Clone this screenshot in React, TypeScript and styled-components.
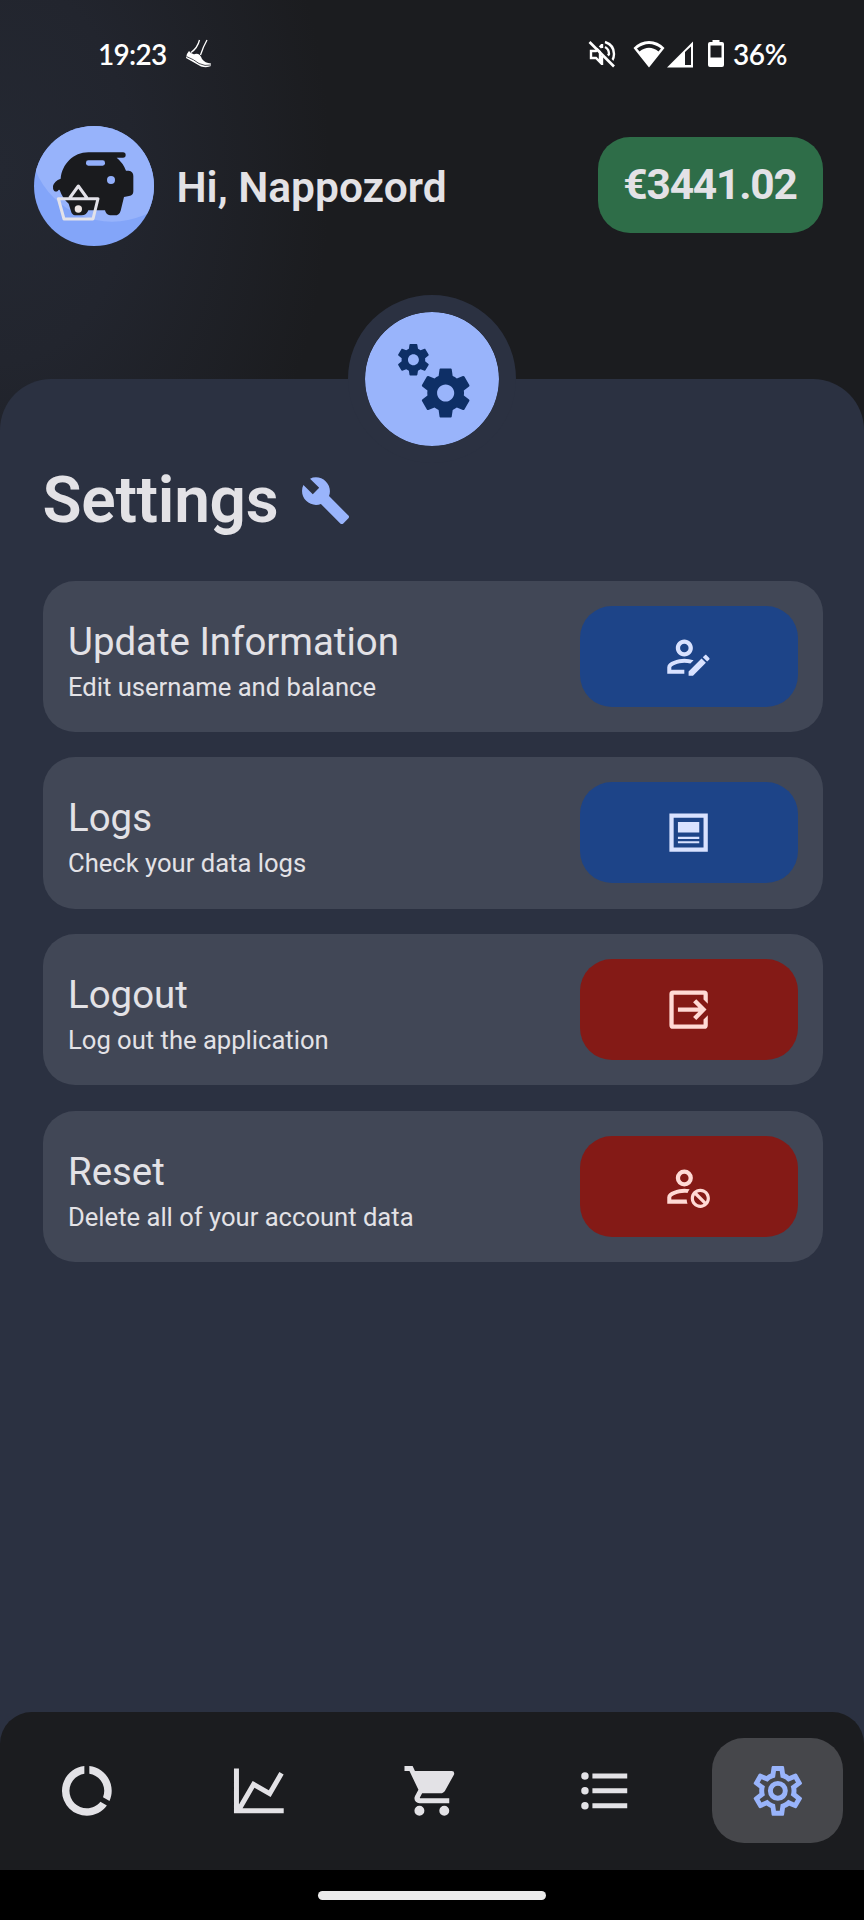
import React from 'react';
import styled, { createGlobalStyle } from 'styled-components';

const GlobalStyle = createGlobalStyle`
  *, *::before, *::after { box-sizing: border-box; }
  body { margin: 0; background: #000; }
`;

const Screen = styled.div`
  width: 864px;
  height: 1920px;
  overflow: hidden;
  display: flex;
  flex-direction: column;
  color: #e3e2e6;
  font-family: Roboto, sans-serif;
  background: #1b1c1f radial-gradient(330px 480px at 0 170px, #242832 0, #22252e 40%, #1b1c1f 100%) no-repeat;
`;

const StatusBar = styled.div`
  height: 108px;
  flex: none;
  display: flex;
  align-items: center;
  justify-content: space-between;
  padding: 0 75px 0 98px;
  color: #fff;
  font: 600 28px/32px Lato, sans-serif;
`;

const StatusGroup = styled.div`
  display: flex;
  align-items: center;
`;

const Clock = styled.span`
  width: 69px;
  white-space: nowrap;
  letter-spacing: -0.7px;
`;

const BatteryLevel = styled.span`
  width: 56px;
  margin-left: 8px;
  white-space: nowrap;
  letter-spacing: -0.4px;
`;

const StatusIcon = styled.svg<{ $ml?: number }>`
  display: block;
  flex: none;
  margin-left: ${(p) => p.$ml ?? 0}px;
`;

const Header = styled.header`
  height: 270.6px;
  flex: none;
  display: flex;
  align-items: flex-start;
  padding: 17.5px 41.5px 0 34px;
`;

const Greeting = styled.h2`
  margin: 40px 0 0 22.5px;
  flex: 1;
  font-size: 42.5px;
  line-height: 44px;
  font-weight: 600;
`;

const Balance = styled.div`
  margin-top: 11.5px;
  width: 225px;
  height: 96px;
  border-radius: 32px;
  display: flex;
  align-items: center;
  justify-content: center;
  background: #2e6d48;
  font-size: 42.5px;
  line-height: 46px;
  font-weight: 700;
  letter-spacing: -1.2px;
`;

const Panel = styled.main`
  position: relative;
  flex: 1;
  padding: 85px 41.3px 0 42.5px;
  border-radius: 51px 51px 0 0;
  background: #2b3141;
`;

const HeroBadge = styled.div`
  position: absolute;
  top: -84px;
  left: 348px;
  width: 168px;
  height: 168px;
  border: 17px solid #2b3141;
  border-radius: 50%;
  display: flex;
  align-items: center;
  justify-content: center;
  background: #99b4fb;
  background-clip: padding-box;
  color: #0e2f66;
`;

const TitleRow = styled.div`
  display: flex;
  align-items: center;
  height: 74px;
  gap: 22px;
  color: #99b4fb;
`;

const Title = styled.h1`
  margin: 0;
  font-size: 64px;
  line-height: 74px;
  font-weight: 600;
  letter-spacing: -0.3px;
  color: #e3e2e6;
`;

const CardList = styled.div`
  margin-top: 43.2px;
  display: flex;
  flex-direction: column;
  gap: 25.4px;
`;

const Card = styled.section`
  height: 151.2px;
  padding: 0 25px 0 25.5px;
  border-radius: 32px;
  display: flex;
  align-items: center;
  justify-content: space-between;
  background: #414756;
`;

const CardText = styled.div`
  padding-top: 9px;
`;

const CardTitle = styled.div`
  font-size: 38.4px;
  line-height: 46px;
`;

const CardNote = styled.div`
  margin-top: 6px;
  font-size: 25.6px;
  line-height: 32px;
`;

const ActionButton = styled.button<{ $danger?: boolean }>`
  width: 218px;
  height: 101px;
  padding: 0;
  border: 0;
  border-radius: 32px;
  display: flex;
  align-items: center;
  justify-content: center;
  background: ${(p) => (p.$danger ? '#841a16' : '#1d4488')};
  color: ${(p) => (p.$danger ? '#ffdad5' : '#d9e2ff')};
`;

const NavBacking = styled.div`
  flex: none;
  background: #2b3141;
`;

const NavBar = styled.nav`
  height: 157.5px;
  border-radius: 32px 32px 0 0;
  display: grid;
  grid-template-columns: repeat(5, 1fr);
  align-items: center;
  justify-items: center;
  background: #1b1c1f;
`;

const NavItem = styled.button<{ $active?: boolean }>`
  width: 131px;
  height: 105px;
  padding: 0;
  border: 0;
  border-radius: 32px;
  display: flex;
  align-items: center;
  justify-content: center;
  background: ${(p) => (p.$active ? '#46474b' : 'transparent')};
  color: ${(p) => (p.$active ? '#99b4fb' : '#e3e2e6')};
`;

const GestureArea = styled.div`
  height: 50.5px;
  flex: none;
  display: flex;
  justify-content: center;
  padding-top: 21px;
  background: #000;
`;

const GestureBar = styled.div`
  width: 228px;
  height: 9px;
  border-radius: 5px;
  background: #ececec;
`;

const paths = {
  cogs: 'M15.9 18.45C17.25 18.45 18.35 17.35 18.35 16C18.35 14.65 17.25 13.55 15.9 13.55C14.54 13.55 13.45 14.65 13.45 16C13.45 17.35 14.54 18.45 15.9 18.45M21.1 16.68L22.58 17.84C22.71 17.95 22.75 18.13 22.66 18.29L21.26 20.71C21.17 20.86 21 20.92 20.83 20.86L19.09 20.16C18.73 20.44 18.33 20.67 17.91 20.85L17.64 22.7C17.62 22.87 17.47 23 17.3 23H14.5C14.32 23 14.18 22.87 14.15 22.7L13.89 20.85C13.46 20.67 13.07 20.44 12.71 20.16L10.96 20.86C10.81 20.92 10.62 20.86 10.54 20.71L9.14 18.29C9.05 18.13 9.09 17.95 9.22 17.84L10.7 16.68L10.65 16L10.7 15.31L9.22 14.16C9.09 14.05 9.05 13.86 9.14 13.71L10.54 11.29C10.62 11.13 10.81 11.07 10.96 11.13L12.71 11.84C13.07 11.56 13.46 11.32 13.89 11.15L14.15 9.29C14.18 9.13 14.32 9 14.5 9H17.3C17.47 9 17.62 9.13 17.64 9.29L17.91 11.15C18.33 11.32 18.73 11.56 19.09 11.84L20.83 11.13C21 11.07 21.17 11.13 21.26 11.29L22.66 13.71C22.75 13.86 22.71 14.05 22.58 14.16L21.1 15.31L21.15 16L21.1 16.68M6.69 8.07C7.56 8.07 8.26 7.37 8.26 6.5C8.26 5.63 7.56 4.92 6.69 4.92C5.82 4.92 5.13 5.63 5.13 6.5C5.13 7.37 5.82 8.07 6.69 8.07M10.03 6.94L11 7.68C11.07 7.75 11.09 7.87 11.03 7.97L10.13 9.53C10.08 9.63 9.96 9.67 9.86 9.63L8.74 9.18L8 9.62L7.81 10.81C7.79 10.92 7.7 11 7.59 11H5.79C5.67 11 5.58 10.92 5.56 10.81L5.4 9.62L4.64 9.18L3.52 9.63C3.41 9.67 3.3 9.63 3.24 9.53L2.34 7.97C2.28 7.87 2.31 7.75 2.39 7.68L3.34 6.94L3.31 6.5L3.34 6.06L2.39 5.32C2.31 5.25 2.28 5.13 2.34 5.03L3.24 3.47C3.3 3.37 3.41 3.33 3.52 3.37L4.63 3.82L5.4 3.38L5.56 2.19C5.58 2.08 5.67 2 5.79 2H7.59C7.7 2 7.79 2.08 7.81 2.19L8 3.38L8.74 3.82L9.86 3.37C9.96 3.33 10.08 3.37 10.13 3.47L11.03 5.03C11.09 5.13 11.07 5.25 11 5.32L10.03 6.06L10.06 6.5L10.03 6.94Z',
  wrench: 'M22.7 19L13.6 9.9C14.5 7.6 14 4.9 12.1 3C10.1 1 7.1 .6 4.7 1.7L9 6L6 9L1.6 4.7C.4 7.1 .9 10.1 2.9 12.1C4.8 14 7.5 14.5 9.8 13.6L18.9 22.7C19.3 23.1 19.9 23.1 20.3 22.7L22.6 20.4C23.1 20 23.1 19.3 22.7 19Z',
  userEdit: 'M2 17V20H10V18.11H3.9V17C3.9 16.36 7.03 14.9 10 14.9C10.96 14.91 11.91 15.04 12.83 15.28L14.35 13.76C12.95 13.29 11.5 13.03 10 13C7.33 13 2 14.33 2 17M10 4C7.79 4 6 5.79 6 8S7.79 12 10 12S14 10.21 14 8S12.21 4 10 4M10 10C8.9 10 8 9.11 8 8S8.9 6 10 6S12 6.9 12 8S11.11 10 10 10M21.7 13.35L20.7 14.35L18.65 12.35L19.65 11.35C19.86 11.14 20.21 11.14 20.42 11.35L21.7 12.63C21.91 12.84 21.91 13.14 21.7 13.35M12 18.94V21H14.06L20.11 14.88L18.06 12.88L12 18.94Z',
  post: 'M3 3H21V21H3ZM5 5V19H19V5ZM7 7H17V12H7ZM7 14H17V15H7ZM7 16H17V17H7Z',
  exit: 'M21 9.3L19 7.3V5H5V19H19V16.7L21 14.7V19.3Q21 21 19.3 21H4.7Q3 21 3 19.3V4.7Q3 3 4.7 3H19.3Q21 3 21 4.7ZM14.1 8.5L15.6 7.1L20.4 12L15.6 16.9L14.1 15.5L16.6 13H7V11H16.6Z',
  userCancel: 'M10 4A4 4 0 0 0 6 8A4 4 0 0 0 10 12A4 4 0 0 0 14 8A4 4 0 0 0 10 4M10 6A2 2 0 0 1 12 8A2 2 0 0 1 10 10A2 2 0 0 1 8 8A2 2 0 0 1 10 6M10 13C7.33 13 2 14.33 2 17V20H11.5A6.3 6.3 0 0 1 11.1 18.1H3.9V17C3.9 16.36 7.03 14.9 10 14.9C10.5 14.9 11 14.95 11.5 15A6.3 6.3 0 0 1 12.5 13.3C11.6 13.1 10.7 13 10 13M17.5 13C15 13 13 15 13 17.5C13 20 15 22 17.5 22C20 22 22 20 22 17.5C22 15 20 13 17.5 13M17.5 14.5C19.16 14.5 20.5 15.84 20.5 17.5C20.5 18.06 20.35 18.58 20.08 19L16 14.92C16.42 14.65 16.94 14.5 17.5 14.5M14.92 16L19 20.08C18.58 20.35 18.06 20.5 17.5 20.5C15.84 20.5 14.5 19.16 14.5 17.5C14.5 16.94 14.65 16.42 14.92 16Z',
  donut: 'M13 2.05V5.08C16.39 5.57 19 8.47 19 12C19 12.9 18.82 13.75 18.5 14.54L21.12 16.07C21.68 14.83 22 13.45 22 12C22 6.82 18.05 2.55 13 2.05M12 19A7 7 0 0 1 5 12C5 8.47 7.61 5.57 11 5.08V2.05C5.94 2.55 2 6.81 2 12A10 10 0 0 0 12 22C15.3 22 18.23 20.39 20.05 17.91L17.45 16.38C16.17 18 14.21 19 12 19Z',
  chart: 'M16 11.78L20.24 4.45L21.97 5.45L16.74 14.5L10.23 10.75L5.46 19H22V21H2V3H4V17.54L9.5 8L16 11.78Z',
  cart: 'M17 18A2 2 0 0 1 19 20A2 2 0 0 1 17 22A2 2 0 0 1 15 20A2 2 0 0 1 17 18M1 2H4.27L5.21 4H20A1 1 0 0 1 21 5C21 5.17 20.95 5.34 20.88 5.5L17.3 11.97C16.96 12.58 16.3 13 15.55 13H8.1L7.2 14.63L7.17 14.75A.25 .25 0 0 0 7.42 15H19V17H7A2 2 0 0 1 5 15C5 14.65 5.09 14.32 5.24 14.04L6.6 11.59L3 4H1V2M7 18A2 2 0 0 1 9 20A2 2 0 0 1 7 22A2 2 0 0 1 5 20A2 2 0 0 1 7 18Z',
  list: 'M7 5H21V7H7V5M7 13V11H21V13H7M4 4.5A1.5 1.5 0 0 1 5.5 6A1.5 1.5 0 0 1 4 7.5A1.5 1.5 0 0 1 2.5 6A1.5 1.5 0 0 1 4 4.5M4 10.5A1.5 1.5 0 0 1 5.5 12A1.5 1.5 0 0 1 4 13.5A1.5 1.5 0 0 1 2.5 12A1.5 1.5 0 0 1 4 10.5M7 19V17H21V19H7M4 16.5A1.5 1.5 0 0 1 5.5 18A1.5 1.5 0 0 1 4 19.5A1.5 1.5 0 0 1 2.5 18A1.5 1.5 0 0 1 4 16.5Z',
  cog: 'M12 8A4 4 0 0 1 16 12A4 4 0 0 1 12 16A4 4 0 0 1 8 12A4 4 0 0 1 12 8M12 10A2 2 0 0 0 10 12A2 2 0 0 0 12 14A2 2 0 0 0 14 12A2 2 0 0 0 12 10M10 22C9.75 22 9.54 21.82 9.5 21.58L9.13 18.93C8.5 18.68 7.96 18.34 7.44 17.94L4.95 18.95C4.73 19.03 4.46 18.95 4.34 18.73L2.34 15.27C2.21 15.05 2.27 14.78 2.46 14.63L4.57 12.97L4.5 12L4.57 11L2.46 9.37C2.27 9.22 2.21 8.95 2.34 8.73L4.34 5.27C4.46 5.05 4.73 4.96 4.95 5.05L7.44 6.05C7.96 5.66 8.5 5.32 9.13 5.07L9.5 2.42C9.54 2.18 9.75 2 10 2H14C14.25 2 14.46 2.18 14.5 2.42L14.87 5.07C15.5 5.32 16.04 5.66 16.56 6.05L19.05 5.05C19.27 4.96 19.54 5.05 19.66 5.27L21.66 8.73C21.79 8.95 21.73 9.22 21.54 9.37L19.43 11L19.5 12L19.43 13L21.54 14.63C21.73 14.78 21.79 15.05 21.66 15.27L19.66 18.73C19.54 18.95 19.27 19.04 19.05 18.95L16.56 17.95C16.04 18.34 15.5 18.68 14.87 18.93L14.5 21.58C14.46 21.82 14.25 22 14 22H10M11.25 4L10.88 6.61C9.68 6.86 8.62 7.5 7.85 8.39L5.44 7.35L4.69 8.65L6.8 10.2C6.4 11.37 6.4 12.64 6.8 13.8L4.68 15.36L5.43 16.66L7.86 15.62C8.63 16.5 9.68 17.14 10.87 17.38L11.24 20H12.76L13.13 17.39C14.32 17.14 15.37 16.5 16.14 15.62L18.57 16.66L19.32 15.36L17.2 13.81C17.6 12.64 17.6 11.37 17.2 10.2L19.31 8.65L18.56 7.35L16.15 8.39C15.38 7.5 14.32 6.86 13.12 6.62L12.75 4H11.25Z',
};

type IconName = keyof typeof paths;

const Glyph = ({ name, size }: { name: IconName; size: number }) => (
  <svg width={size} height={size} viewBox="0 0 24 24" fill="currentColor" fillRule="evenodd" aria-hidden>
    <path d={paths[name]} />
  </svg>
);

const Avatar = () => (
  <svg width="120" height="120" viewBox="42 32 360 360" aria-hidden>
    <defs>
      <clipPath id="disc"><circle cx="222" cy="212" r="180" /></clipPath>
    </defs>
    <g clipPath="url(#disc)">
      <rect x="42" y="32" width="360" height="360" fill="#83a5f9" />
      <circle cx="276" cy="71" r="248" fill="#97b3fb" />
    </g>
    <path
      fill="#1a1b1e"
      d="M205 111H309Q317 111 317 119T309 127H290Q309 142 318 166H326Q340 168 340 182V228Q340 241 327 242L312 245L302 286Q298 300 284 300H270Q258 299 255 285H205Q200 300 185 300H165Q156 299 153 288L146 265Q128 250 119 224Q116 222 114 226Q108 231 102 226Q98 221 99 212Q103 197 122 190C126 147 160 111 205 111Z"
    />
    <rect x="198" y="135" width="57" height="16" rx="7" fill="#92affb" />
    <circle cx="273" cy="194" r="12" fill="#92affb" />
    <path d="M115 250H234L219 311H132ZM149 248L175 212L201 248" fill="none" stroke="#e3e2e9" strokeWidth="9" strokeLinejoin="round" />
    <circle cx="175" cy="281" r="11" fill="#ebe4e2" />
  </svg>
);

const settings: { title: string; note: string; icon: IconName; danger?: boolean }[] = [
  { title: 'Update Information', note: 'Edit username and balance', icon: 'userEdit' },
  { title: 'Logs', note: 'Check your data logs', icon: 'post' },
  { title: 'Logout', note: 'Log out the application', icon: 'exit', danger: true },
  { title: 'Reset', note: 'Delete all of your account data', icon: 'userCancel', danger: true },
];

const tabs: IconName[] = ['donut', 'chart', 'cart', 'list', 'cog'];

export default function App() {
  return (
    <>
      <GlobalStyle />
      <Screen>
        <StatusBar>
          <StatusGroup>
            <Clock>19:23</Clock>
            <StatusIcon $ml={18} width="27" height="30" viewBox="0 0 27 30">
              <path d="M14.5 1Q12.5 9 6 13.5M22 1Q18 8 15.5 16" fill="none" stroke="#fff" strokeWidth="1.3" />
              <path d="M4 12Q7 16 10 15Q15 14 17 20Q20 24 26 24.5V27Q22 29 16 27.5L1 19Q1 15 4 12Z" fill="#fff" />
              <path d="M1.5 17.5Q9 20.500 14 24.500Q20 27.500 26 26" fill="none" stroke="#1f2128" strokeWidth="0.8" />
            </StatusIcon>
          </StatusGroup>
          <StatusGroup>
            <StatusIcon width="28" height="28" viewBox="0 0 28 28" fill="none" stroke="#fff" strokeWidth="2.4">
              <path d="M3 11H8L12 7V22L8 18H3ZM14 4V8M14 16V25M17 2Q26 5 26 14Q26 18 24 21M17 7Q21 9 21 14L19 17" />
              <path d="M3.500 .5L28.500 25.500" stroke="#1b1c1f" strokeWidth="2" />
              <path d="M1.5 2L26 26.5" strokeWidth="2.6" />
            </StatusIcon>
            <StatusIcon $ml={17} width="32" height="28" viewBox="0 0 32 28">
              <path fillRule="evenodd" fill="#fff" d="M16 1Q25 1 31.5 8L16 27.5L.5 8Q7 1 16 1ZM4 8.5L6.5 11.5Q16 4 25.5 11.5L28 8.5Q16 -.5 4 8.5Z" />
            </StatusIcon>
            <StatusIcon $ml={1.5} width="28" height="28" viewBox="0 0 28 28">
              <path fillRule="evenodd" fill="#fff" d="M1 27.5L27 1.5V27.5ZM19 12V25H25V6.5Z" />
            </StatusIcon>
            <StatusIcon $ml={13} width="18" height="30" viewBox="0 0 18 30">
              <path fillRule="evenodd" fill="#fff" d="M5.5 1H12.5V3H15Q17 3 17 5V26Q17 28 15 28H3Q1 28 1 26V5Q1 3 3 3H5.5ZM3.5 6.5V18.5H14.5V6.5Z" />
            </StatusIcon>
            <BatteryLevel>36%</BatteryLevel>
          </StatusGroup>
        </StatusBar>

        <Header>
          <Avatar />
          <Greeting>Hi, Nappozord</Greeting>
          <Balance>€3441.02</Balance>
        </Header>

        <Panel>
          <HeroBadge><Glyph name="cogs" size={84} /></HeroBadge>
          <TitleRow>
            <Title>Settings</Title>
            <Glyph name="wrench" size={51.2} />
          </TitleRow>
          <CardList>
            {settings.map((s) => (
              <Card key={s.title}>
                <CardText>
                  <CardTitle>{s.title}</CardTitle>
                  <CardNote>{s.note}</CardNote>
                </CardText>
                <ActionButton $danger={s.danger} aria-label={s.title}>
                  <Glyph name={s.icon} size={51.2} />
                </ActionButton>
              </Card>
            ))}
          </CardList>
        </Panel>

        <NavBacking>
          <NavBar>
            {tabs.map((t) => (
              <NavItem key={t} $active={t === 'cog'} aria-label={t}>
                <Glyph name={t} size={59.7} />
              </NavItem>
            ))}
          </NavBar>
        </NavBacking>
        <GestureArea><GestureBar /></GestureArea>
      </Screen>
    </>
  );
}
